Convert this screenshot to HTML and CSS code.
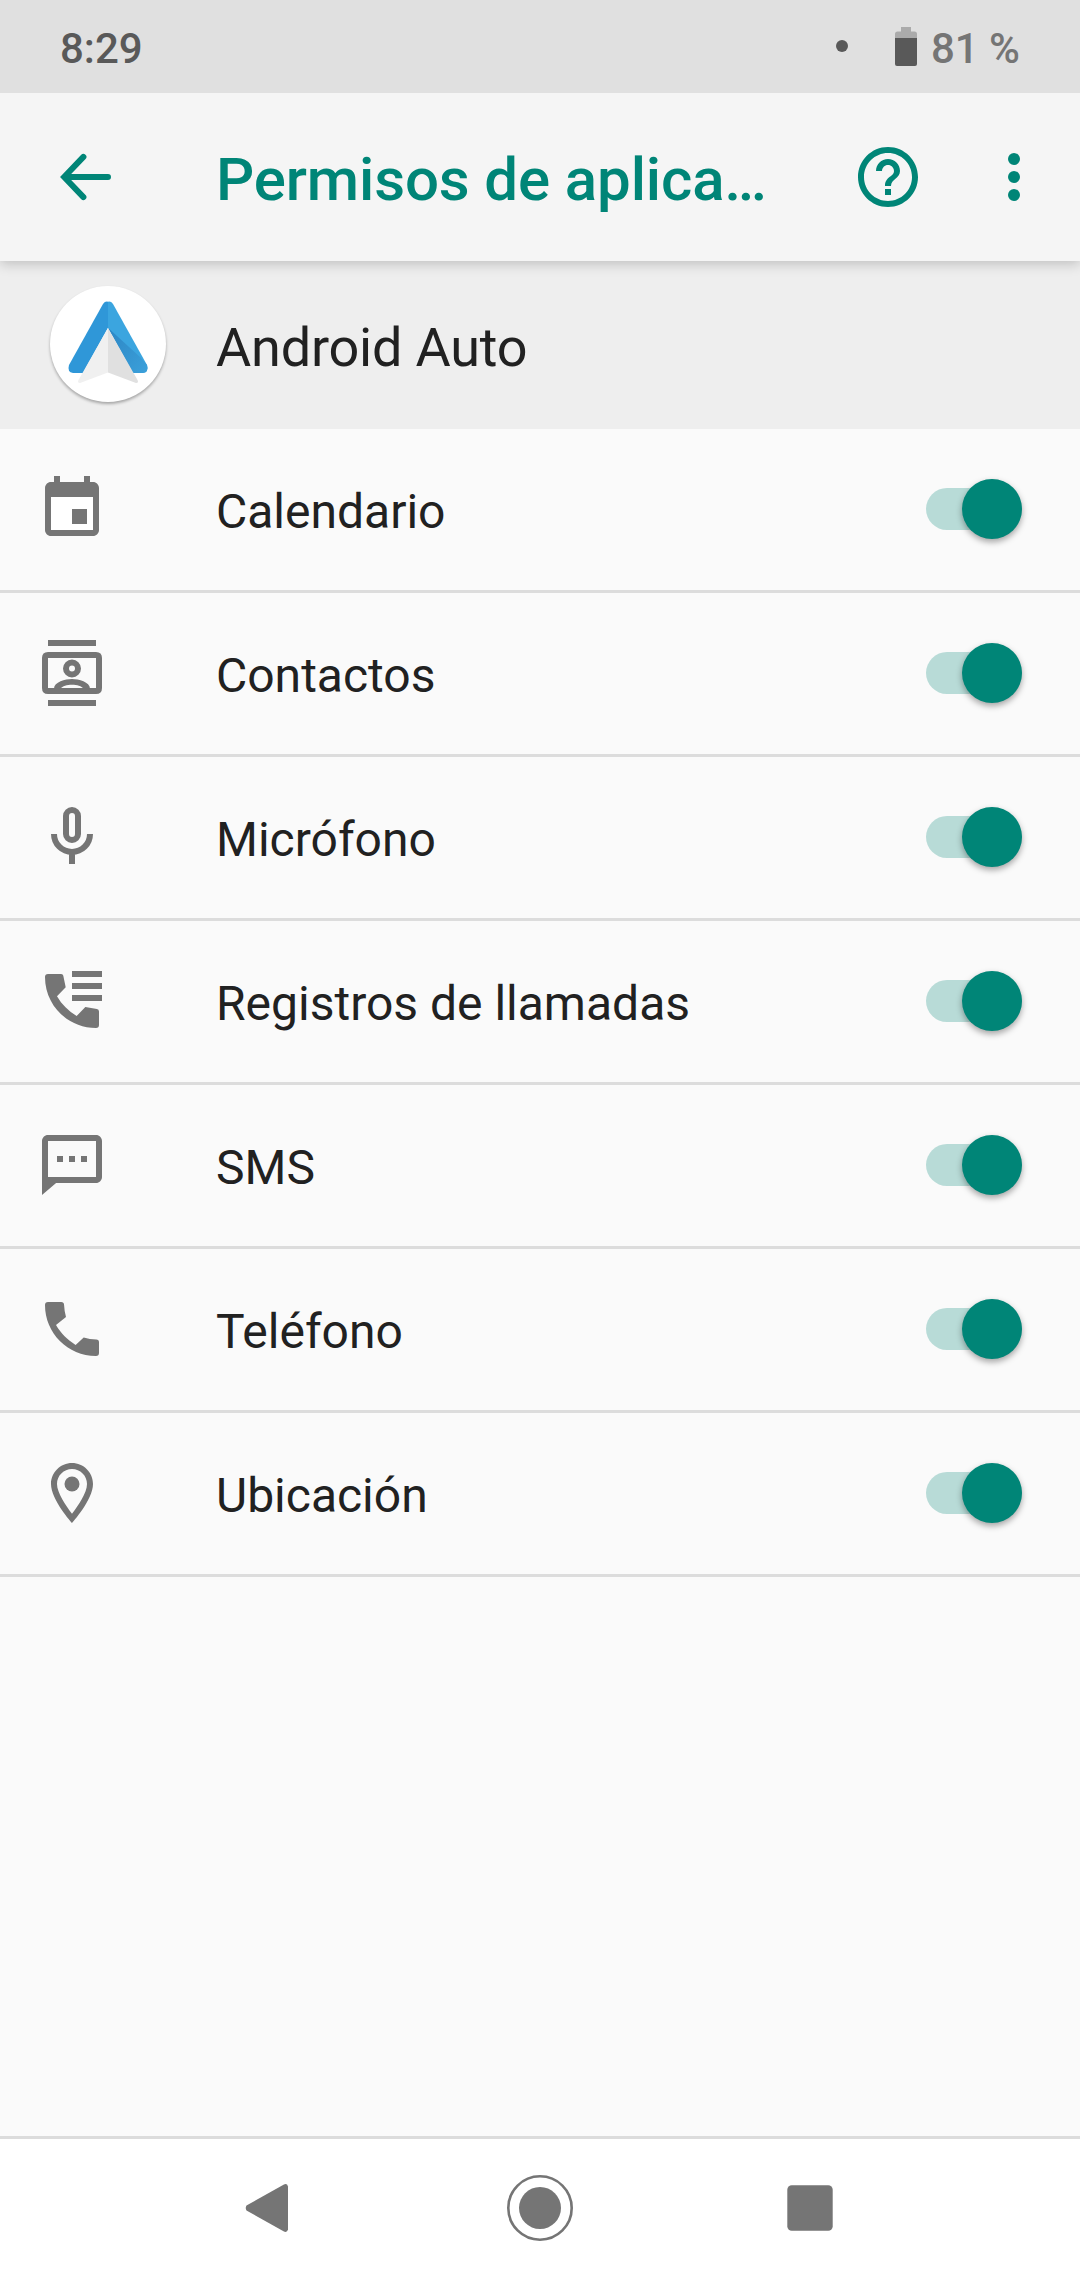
FILE: index.html
```html
<!DOCTYPE html>
<html lang="es">
<head>
<meta charset="utf-8">
<title>Permisos de aplicaciones</title>
<link rel="stylesheet" href="styles.css">
</head>
<body>
<div class="screen">
  <div class="status-bar">
    <span class="clock">8:29</span>
    <span class="notification-dot"></span>
    <svg class="battery" viewBox="0 0 22 39"><path fill="#ababab" d="M6 0h10v4.500h3.500q2.500 0 2.500 2.500V11H0V7Q0 4.500 2.500 4.500H6z"/><path fill="#595959" d="M0 11h22v26q0 2-2 2H2q-2 0-2-2z"/></svg>
    <span class="battery-level">81 %</span>
  </div>

  <header class="toolbar">
    <svg class="icon back" viewBox="0 0 24 24"><path fill="none" stroke="currentColor" stroke-width="2" stroke-linecap="round" stroke-linejoin="miter" d="M11.800 5.300L5.400 12l6.400 6.700M6 12h14"/></svg>
    <h1 class="title">Permisos de aplica…</h1>
    <svg class="icon help" viewBox="0 0 24 24"><path d="M11 18h2v-2h-2v2zm1-16C6.480 2 2 6.480 2 12s4.480 10 10 10 10-4.480 10-10S17.520 2 12 2zm0 18c-4.410 0-8-3.590-8-8s3.590-8 8-8 8 3.590 8 8-3.590 8-8 8zm0-14c-2.210 0-4 1.790-4 4h2c0-1.100.9-2 2-2s2 .9 2 2c0 2-3 1.750-3 5h2c0-2.250 3-2.500 3-5 0-2.210-1.790-4-4-4z"/></svg>
    <svg class="icon more" viewBox="0 0 24 24"><circle cx="12" cy="6" r="2"/><circle cx="12" cy="12" r="2"/><circle cx="12" cy="18" r="2"/></svg>
  </header>

  <div class="app-header">
    <div class="app-icon">
      <svg viewBox="0 0 116 116">
        <defs>
          <linearGradient id="fold" x1="0" y1="0" x2="1" y2="1"><stop offset="0" stop-color="#2d86c4"/><stop offset="1" stop-color="#3ba0da"/></linearGradient>
        </defs>
        <path fill="#2f97d8" d="M58 15.700v26L33 87H23q-6-1-4-8L53 18q2-3 5-2.300z"/>
        <path fill="#3ba5df" d="M58 15.700q3-.700 5 2.300l34 61q2 7-4 8H83L58 41.700z"/>
        <path fill="url(#fold)" d="M58 41.700L90 71l7 8q2 7-4 8H83z"/>
        <path fill="#f0f0f0" d="M58 42v44.500L30 97q-3 0-1.500-3z"/>
        <path fill="#e0e0e0" d="M58 42v44.500l28 10.500q3 0 1.500-3z"/>
      </svg>
    </div>
    <h2 class="app-name">Android Auto</h2>
  </div>

  <ul class="permissions">
    <li class="row">
      <svg class="icon" viewBox="0 0 24 24"><path fill="#fff" d="M5 8h14v11H5z"/><path d="M17 12h-5v5h5v-5zM16 1v2H8V1H6v2H5c-1.110 0-1.990.9-1.990 2L3 19c0 1.100.89 2 2 2h14c1.100 0 2-.9 2-2V5c0-1.100-.9-2-2-2h-1V1h-2zm3 18H5V8h14v11z"/></svg>
      <span class="label">Calendario</span><span class="switch"></span>
    </li>
    <li class="row">
      <svg class="icon" viewBox="0 0 24 24"><path d="M4 1h16v2H4zM4 21h16v2H4zM4 5h16q2 0 2 2v10q0 2-2 2H4q-2 0-2-2V7q0-2 2-2zm0 2v10h16V7z" fill-rule="evenodd"/><circle cx="12" cy="10.500" r="2" fill="none" stroke="currentColor" stroke-width="2"/><path d="M6 17.200C6 15 9.800 14 12 14s6 1 6 3.200h-2.200C15.200 16.300 13.700 15.900 12 15.900s-3.200.4-3.800 1.300z"/></svg>
      <span class="label">Contactos</span><span class="switch"></span>
    </li>
    <li class="row">
      <svg class="icon" viewBox="0 0 24 24"><path fill="none" stroke="currentColor" stroke-width="2" d="M10 5a2 2 0 0 1 4 0v6a2 2 0 0 1-4 0zM6 11a6 6 0 0 0 12 0M12 17v4"/></svg>
      <span class="label">Micrófono</span><span class="switch"></span>
    </li>
    <li class="row">
      <svg class="icon" viewBox="0 0 24 24"><path d="M12 2h10v2H12zM12 6h10v2H12zM12 10h10v2H12zM9.100 3.600L9.900 7.400 7 10.450C8.600 13.200 10.800 15.400 13.550 17L16.450 14l3.850.7q.7.150.7.800V20q0 1-1 1C10.600 21 3 13.400 3 4q0-1 1-1h4.400q.6 0 .7.600z"/></svg>
      <span class="label">Registros de llamadas</span><span class="switch"></span>
    </li>
    <li class="row">
      <svg class="icon" viewBox="0 0 24 24"><path fill-rule="evenodd" d="M4 2h16c1.100 0 2 .9 2 2v12c0 1.100-.9 2-2 2H6.700L2 22V4c0-1.100.9-2 2-2zm0 2v12h16V4zM7 9h2v2H7zM11 9h2v2h-2zM15 9h2v2h-2z"/></svg>
      <span class="label">SMS</span><span class="switch"></span>
    </li>
    <li class="row">
      <svg class="icon" viewBox="0 0 24 24"><path d="M8.400 3q.9 0 .95.900.1 2.100.65 4.100L6.670 10.700C8.400 13.600 10.400 15.600 13.200 17.300L15.900 14.800q2 .6 4.200.7.900.050.9.900V20q0 1-1 1C10.600 21 3 13.400 3 4q0-1 1-1z" transform="translate(0 0)"/></svg>
      <span class="label">Teléfono</span><span class="switch"></span>
    </li>
    <li class="row">
      <svg class="icon" viewBox="0 0 24 24"><path fill-rule="evenodd" d="M12 2C8.130 2 5 5.130 5 9c0 5.250 7 13 7 13s7-7.750 7-13c0-3.870-3.130-7-7-7zM7 9c0-2.760 2.240-5 5-5s5 2.240 5 5c0 2.880-2.880 7.190-5 9.880C9.920 16.210 7 11.850 7 9z"/><circle cx="12" cy="9" r="2.500"/></svg>
      <span class="label">Ubicación</span><span class="switch"></span>
    </li>
  </ul>

  <nav class="nav-bar">
    <svg viewBox="0 0 72 72"><path d="M12.500 33.500L49.500 12.700Q53 10.800 54 14.500V57.500Q53 61.200 49.500 59.300L12.500 38.500Q11 36 12.500 33.500z"/></svg>
    <svg viewBox="0 0 72 72"><circle cx="36" cy="36" r="31.700" fill="none" stroke="currentColor" stroke-width="2.600"/><circle cx="36" cy="36" r="21"/></svg>
    <svg viewBox="0 0 72 72"><rect x="13.300" y="13.300" width="45.400" height="45.400" rx="4.500"/></svg>
  </nav>
</div>
</body>
</html>
```
FILE: styles.css
```css
* { box-sizing: border-box; }

body {
  margin: 0;
  font-family: Roboto, "Noto Sans", sans-serif;
  color: #212121;
}

svg { display: block; fill: currentColor; flex: none; }

.screen {
  display: flex;
  flex-direction: column;
  width: 1080px;
  height: 2280px;
  background: #fafafa;
}

.status-bar {
  display: flex;
  align-items: center;
  height: 93px;
  padding: 3px 60px 0;
  background: #e0e0e0;
  color: #595959;
  font-size: 42px;
  font-weight: 500;
  z-index: 2;
}

.notification-dot {
  width: 12px;
  height: 12px;
  margin: 0 47px 4px auto;
  border-radius: 50%;
  background: #595959;
}

.battery { width: 22px; height: 39px; margin: 0 14px 3px 0; }
.battery-level { color: #757575; }

.toolbar {
  display: flex;
  align-items: center;
  height: 168px;
  padding: 0 30px 0 48px;
  background: #f5f5f5;
  color: #008577;
  box-shadow: 0 3px 12px rgba(0, 0, 0, .2);
  z-index: 1;
}

.icon { width: 72px; height: 72px; }

.title {
  flex: 1;
  margin: 0 0 0 96px;
  padding-top: 5px;
  font-size: 60px;
  font-weight: 500;
  line-height: 70px;
  letter-spacing: -.13px;
  white-space: nowrap;
}

.more { margin-left: 54px; }

.app-header {
  display: flex;
  align-items: center;
  height: 168px;
  padding-left: 50px;
  background: #eee;
}

.app-icon {
  width: 116px;
  height: 116px;
  margin-bottom: 2px;
  border-radius: 50%;
  background: #fff;
  box-shadow: 0 2px 3px rgba(0, 0, 0, .3);
}

.app-name {
  margin: 5px 0 0 50px;
  font-size: 54px;
  font-weight: 400;
  letter-spacing: -.2px;
}

.permissions {
  flex: 1;
  margin: 0;
  padding: 0;
  list-style: none;
}

.row {
  display: flex;
  align-items: center;
  height: 164px;
  padding: 0 58px 0 36px;
  border-bottom: 3px solid #dcdcdc;
}

.row .icon { color: #757575; margin-bottom: 1px; }

.label {
  flex: 1;
  margin-left: 108px;
  padding-top: 5px;
  font-size: 48px;
  line-height: 56px;
}

.switch {
  display: flex;
  justify-content: flex-end;
  align-items: center;
  width: 96px;
  height: 42px;
  margin-bottom: 1px;
  border-radius: 21px;
  background: #b8dbd7;
}

.switch::after {
  content: "";
  flex: none;
  width: 60px;
  height: 60px;
  margin-right: .5px;
  border-radius: 50%;
  background: #008577;
  box-shadow: 0 3px 6px rgba(0, 0, 0, .35);
}

.nav-bar {
  display: flex;
  justify-content: space-between;
  height: 144px;
  padding: 33px 234px 0;
  border-top: 3px solid #dcdcdc;
  background: #fff;
  color: #757575;
}

.nav-bar svg { width: 72px; height: 72px; }
```
